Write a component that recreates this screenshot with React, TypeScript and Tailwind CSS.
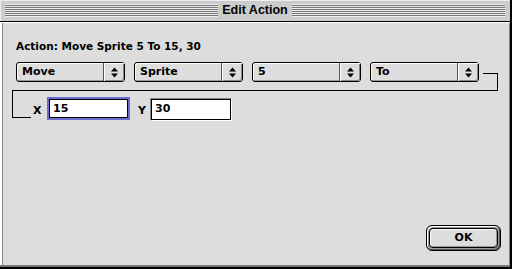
const font = { fontFamily: '"DejaVu Sans", "Liberation Sans", sans-serif' };

function Arrows() {
  return (
    <svg width="7" height="11" viewBox="0 0 7 11">
      <polygon points="3.5,0.5 7,4.5 0,4.5" fill="#000" />
      <polygon points="0,6.5 7,6.5 3.5,10.5" fill="#000" />
    </svg>
  );
}

function Popup({ label }: { label: string }) {
  return (
    <div className="w-[109px] h-[20px] flex rounded-[3px] border border-black bg-[#dddddd] shadow-[inset_1px_1px_0_#fff,inset_-1px_-1px_0_#999]">
      <span className="flex-1 pl-[5px] text-[11px] leading-[18px] font-bold text-black">{label}</span>
      <span className="w-[21px] border-l border-[#555] flex items-center justify-center shadow-[inset_1px_1px_0_#fff,inset_-1px_-1px_0_#888]">
        <Arrows />
      </span>
    </div>
  );
}

function Stripes() {
  return (
    <div className="flex-1 h-[13px] bg-[repeating-linear-gradient(to_bottom,#eeeeee_0px,#eeeeee_1px,#777777_1px,#777777_2px)]" />
  );
}

export default function App() {
  return (
    <div className="w-[512px] h-[269px] bg-black flex flex-col overflow-hidden" style={font}>
      {/* title bar */}
      <div className="w-[510px] h-[21px] bg-[#cccccc] flex items-center px-[5px] shadow-[inset_1px_1px_0_#eee]">
        <Stripes />
        <span
          className="px-[4px] text-[12.5px] leading-[15px] font-bold text-black"
          style={{ fontFamily: '"Liberation Sans", sans-serif' }}
        >
          Edit Action
        </span>
        <Stripes />
      </div>

      {/* body */}
      <div className="mt-[1px] w-[510px] h-[243px] bg-[#dddddd] flex flex-col shadow-[inset_2px_1px_0_#fff,inset_3px_0_0_#888,inset_-1px_0_0_#888]">
        <div className="pt-[18px] pl-[16px] text-[10.5px] leading-[13px] font-bold text-black">
          Action: Move Sprite 5 To 15, 30
        </div>

        <div className="mt-[9px] pl-[16px] flex items-start gap-[9px]">
          <Popup label="Move" />
          <Popup label="Sprite" />
          <Popup label="5" />
          <Popup label="To" />
          <div className="-ml-[5px] mt-[11px] w-[15px] h-[17px] border-t border-r border-black" />
        </div>

        <div className="ml-[12px] w-[486px] border-t border-black">
          <div className="flex items-start">
            <div className="w-[19px] h-[27px] border-l border-b border-black" />
            <span className="ml-[2px] mt-[13px] w-[14px] text-[11px] leading-[13px] font-bold text-black">X</span>
            <div className="mt-[6px] w-[83px] h-[23px] border-2 border-[#6b6bd0] bg-white">
              <div className="h-full border border-black pl-[3px] text-[11px] leading-[17px] font-bold text-black">15</div>
            </div>
            <span className="ml-[8px] mt-[13px] w-[12px] text-[11px] leading-[13px] font-bold text-black">Y</span>
            <div className="mt-[7px] w-[82px] h-[23px] border border-t-[#888] border-l-[#888] border-b-white border-r-white">
              <div className="h-full border border-black bg-white pl-[3px] text-[11px] leading-[17px] font-bold text-black">30</div>
            </div>
          </div>
        </div>

        <div className="mt-auto flex justify-end pr-[9px] pb-[14px]">
          <div className="w-[75px] h-[26px] rounded-[6px] border border-black p-[2px] bg-[#9a9a9a] shadow-[inset_1px_1px_0_#fff,inset_-1px_-1px_0_#555]">
            <div className="h-full rounded-[4px] border border-black bg-[#dddddd] shadow-[inset_1px_1px_0_#fff,inset_-1px_-1px_0_#999] flex items-center justify-center text-[11px] font-bold text-black">
              OK
            </div>
          </div>
        </div>
      </div>
      <div className="w-[510px] h-[2px] bg-[#777777]" />
    </div>
  );
}
